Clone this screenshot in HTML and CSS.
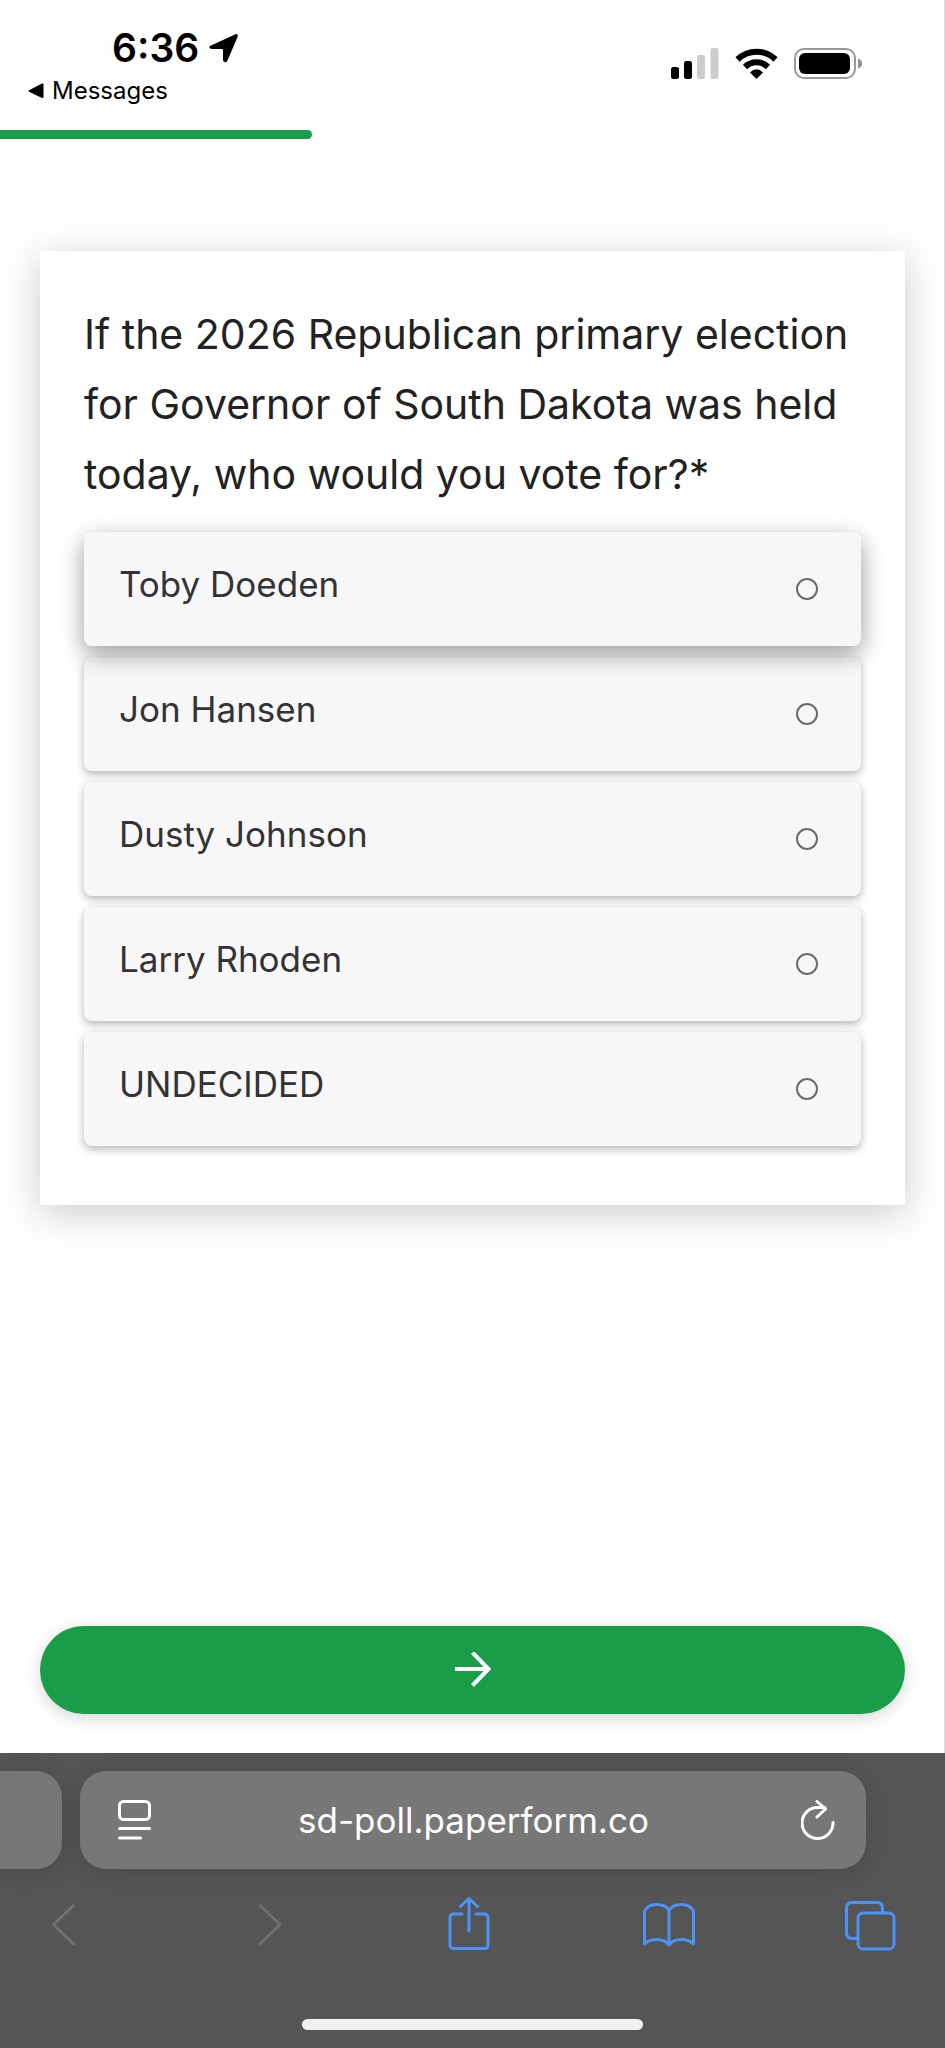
FILE: index.html
```
<!DOCTYPE html>
<html lang="en">
	<head>
		<meta charset="UTF-8">
		<title>South Dakota Poll</title>
		<meta name="viewport" content="width=device-width, initial-scale=1.0">
		<link rel="stylesheet" href="styles.css">
	</head>

	<body>
		<div class="page">
			<header class="status">
				<div class="status-left">
					<div class="clock">
						<span>6:36</span>
						<svg width="30" height="30" viewBox="0 0 30 30"><path d="M2 12.500L26 1.500Q29.500 0 28.500 4L18.500 27.500Q17.500 30 15.500 29Q14 28.500 14 26.500V17Q14 16 13 16H3Q.5 16 .3 14.200Q.2 13.200 2 12.500Z" fill="#000"/></svg>
					</div>
					<a class="back-app" href="#">
						<svg width="16" height="16" viewBox="0 0 16 16"><path d="M1 7.200L14 .6Q15.500 .2 15.500 1.500V14Q15.500 15.400 14 15L1 8.800Q0 8 1 7.200Z" fill="#000"/></svg>
						Messages
					</a>
				</div>
				<div class="status-right">
					<svg width="48" height="31" viewBox="0 0 48 31">
						<rect x="0" y="19" width="8" height="12" rx="2.500"/>
						<rect x="13" y="13" width="8" height="18" rx="2.500"/>
						<rect x="26" y="7" width="8" height="24" rx="2.500" fill="#ccc"/>
						<rect x="39.500" y="0" width="8" height="31" rx="2.500" fill="#ccc"/>
					</svg>
					<svg width="43" height="31" viewBox="0 0 43 31">
						<g fill="none" stroke="#000" stroke-width="6">
							<path d="M2.500 11.500A27 27 0 0 1 40.500 11.500"/>
							<path d="M10 19A16.500 16.500 0 0 1 33 19"/>
						</g>
						<path d="M15 24.500Q21.500 18 28 24.500L22.500 30Q21.500 31 20.500 30Z"/>
					</svg>
					<svg width="68" height="31" viewBox="0 0 68 31">
						<rect x="1" y="1" width="60" height="29" rx="9" fill="none" stroke="#999" stroke-width="2"/>
						<rect x="5" y="5" width="51" height="21" rx="6"/>
						<path d="M64 10.500Q68 12 68 15.500Q68 19 64 20.500Z" fill="#8c8c8c"/>
					</svg>
				</div>
			</header>

			<div class="progress"></div>

			<form class="poll">
				<fieldset class="card">
					<legend class="question">If the 2026 Republican primary election for Governor of South Dakota was held today, who would you vote for?*</legend>
					<div class="options">
						<label class="option active"><span>Toby Doeden</span><input type="radio" name="vote"></label>
						<label class="option"><span>Jon Hansen</span><input type="radio" name="vote"></label>
						<label class="option"><span>Dusty Johnson</span><input type="radio" name="vote"></label>
						<label class="option"><span>Larry Rhoden</span><input type="radio" name="vote"></label>
						<label class="option"><span>UNDECIDED</span><input type="radio" name="vote"></label>
					</div>
				</fieldset>
				<button class="next" type="button" aria-label="Next">
					<svg width="36" height="36" viewBox="0 0 36 36" fill="none" stroke="#fff" stroke-width="4"><path d="M0 17H33M17.500 .5L33.500 17L17.500 33.500"/></svg>
				</button>
			</form>
		</div>

		<footer class="browser">
			<div class="tabs">
				<div class="tab-prev"></div>
				<div class="address">
					<button type="button" aria-label="Page menu">
						<svg width="34" height="40" viewBox="0 0 34 40" fill="none" stroke="#fff" stroke-width="3" stroke-linecap="round"><rect x="1.500" y="1.500" width="30" height="18" rx="4"/><path d="M1.500 28.500H31.500M1.500 38H22.500"/></svg>
					</button>
					<input type="text" value="sd-poll.paperform.co" aria-label="Address">
					<button type="button" aria-label="Reload">
						<svg width="34" height="40" viewBox="0 0 34 40" fill="none" stroke="#fff" stroke-width="3" stroke-linecap="round" stroke-linejoin="round"><path d="M32 22.500A15.500 15.500 0 1 1 16.500 7.500H24M16 1.500L24.500 9L16 17"/></svg>
					</button>
				</div>
			</div>
			<nav class="tools">
				<button type="button" aria-label="Back" disabled>
					<svg viewBox="0 0 54 54"><path d="M37.500 8.500L17.500 27.500L37.500 47"/></svg>
				</button>
				<button type="button" aria-label="Forward" disabled>
					<svg viewBox="0 0 54 54"><path d="M22 8.500L42 27.500L22 47"/></svg>
				</button>
				<button type="button" aria-label="Share">
					<svg viewBox="0 0 54 54"><path d="M22 17H14Q10 17 10 21V47.500Q10 51.500 14 51.500H44Q48 51.500 48 47.500V21Q48 17 44 17H36M29 34V2M20.500 9.500L29 1.500L37.500 9.500"/></svg>
				</button>
				<button type="button" aria-label="Bookmarks">
					<svg viewBox="0 0 54 54"><path d="M28 13Q24 7.500 15.500 7.500Q7 7.500 3.500 14V47Q8 42.500 15.500 42.500Q24 42.500 28 48Q32 42.500 40 42.500Q48 42.500 52.500 47V14Q49 7.500 40.500 7.500Q32 7.500 28 13ZM28 13V48"/></svg>
				</button>
				<button type="button" aria-label="Tabs">
					<svg viewBox="0 0 54 54"><path d="M14 41.500H9Q3.500 41.500 3.500 36V11Q3.500 5.500 9 5.500H34Q39.500 5.500 39.500 11V16"/><rect x="15" y="16" width="36" height="36" rx="5"/></svg>
				</button>
			</nav>
			<div class="home-bar"></div>
		</footer>
	</body>
</html>
```

FILE: styles.css
```
* {
	box-sizing: border-box;
}

body {
	display: flex;
	flex-direction: column;
	min-height: 100vh;
	margin: 0;
	background: #fefefe;
	color: #000;
	font-family: Inter, "Liberation Sans", sans-serif;
}

button {
	display: flex;
	align-items: center;
	justify-content: center;
	padding: 0;
	border: 0;
	background: none;
}

svg {
	display: block;
}

.page {
	display: flex;
	flex: 1;
	flex-direction: column;
	box-shadow: inset -1px 0 #ddd;
}

/* phone status bar */
.status {
	display: flex;
	justify-content: space-between;
	height: 130px;
	padding: 24px 83px 0 28px;
}

.clock {
	display: flex;
	align-items: center;
	gap: 10px;
	padding-left: 84px;
	font-size: 39px;
	font-weight: 600;
	line-height: 48px;
}

.back-app {
	display: flex;
	align-items: center;
	gap: 8px;
	color: #000;
	font-size: 24px;
	line-height: 38px;
	text-decoration: none;
}

.status-right {
	display: flex;
	gap: 16px;
	padding-top: 24px;
}

.progress {
	width: 33%;
	height: 9px;
	border-radius: 0 5px 5px 0;
	background: #1a9c49;
}

/* form */
.poll {
	display: flex;
	flex: 1;
	flex-direction: column;
	justify-content: space-between;
	padding: 112px 40px 39px;
}

.card {
	min-width: 0;
	margin: 0;
	padding: 48px 44px 59px;
	border: 0;
	background: #fff;
	box-shadow: 0 8px 36px rgba(0, 0, 0, 0.2);
}

.question {
	float: left;
	width: 100%;
	padding: 0;
	color: #222;
	font-size: 41px;
	line-height: 70px;
}

.options {
	display: flex;
	clear: both;
	flex-direction: column;
	gap: 11px;
	padding-top: 23px;
}

.option {
	display: flex;
	align-items: center;
	justify-content: space-between;
	height: 114px;
	padding: 0 43px 0 35px;
	border-radius: 8px;
	background: #f7f7f7;
	box-shadow: 0 3px 8px rgba(0, 0, 0, 0.3);
	color: #333;
	font-size: 35px;
	line-height: 48px;
}

.option span {
	padding-bottom: 10px;
}

.option.active {
	position: relative;
	box-shadow: 0 8px 24px rgba(0, 0, 0, 0.4);
}

.option input {
	width: 22px;
	height: 22px;
	margin: 0;
	appearance: none;
	border: 2px solid #6b6b6b;
	border-radius: 50%;
}

.option input:checked {
	background: #1a9c49;
}

.next {
	height: 88px;
	border-radius: 44px;
	background: #1a9c49;
	box-shadow: 0 4px 16px rgba(0, 0, 0, 0.16);
}

/* browser toolbar */
.browser {
	height: 295px;
	padding-top: 18px;
	background: #555;
}

.tabs {
	display: flex;
	gap: 18px;
	padding-right: 79px;
}

.tab-prev {
	width: 62px;
	border-radius: 0 26px 26px 0;
	background: #777;
	box-shadow: 0 4px 24px rgba(0, 0, 0, 0.15);
}

.address {
	display: flex;
	flex: 1;
	align-items: center;
	height: 98px;
	padding: 0 31px 0 38px;
	border-radius: 26px;
	background: #777;
	box-shadow: 0 4px 24px rgba(0, 0, 0, 0.15);
}

.address input {
	flex: 1;
	min-width: 0;
	padding: 0 6px 0 0;
	border: 0;
	background: none;
	color: #fff;
	font-family: inherit;
	font-size: 35px;
	line-height: 48px;
	text-align: center;
}

.tools {
	display: flex;
	justify-content: space-between;
	padding: 28px 48px 0 36px;
}

.tools svg {
	width: 54px;
	height: 54px;
	fill: none;
	stroke: #4b93f7;
	stroke-width: 3;
	stroke-linecap: round;
	stroke-linejoin: round;
}

.tools button:disabled svg {
	stroke: #707070;
}

.home-bar {
	width: 36%;
	height: 11px;
	margin: 68px auto 0;
	border-radius: 6px;
	background: #f0f0f0;
}
```
